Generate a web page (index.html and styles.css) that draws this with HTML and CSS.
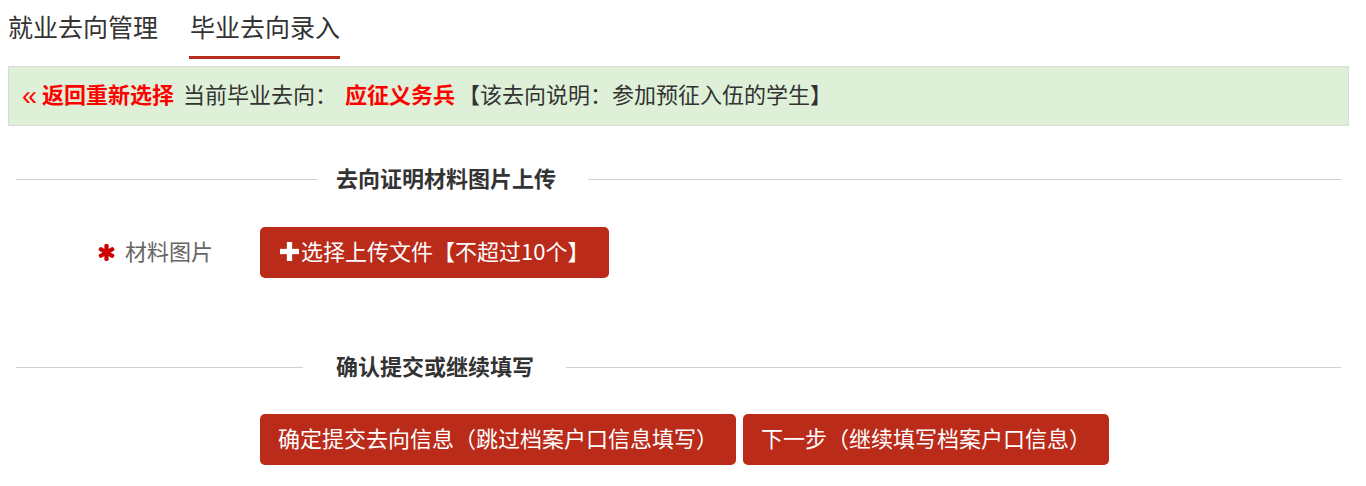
FILE: index.html
```html
<!DOCTYPE html>
<html lang="zh-CN">
<head>
  <meta charset="UTF-8">
  <title>毕业去向录入</title>
  <link rel="stylesheet" href="styles.css">
</head>
<body>
  <ul class="tabs">
    <li class="tab">就业去向管理</li>
    <li class="tab active">毕业去向录入</li>
  </ul>

  <div class="alert">
    <a class="back" href="#"><span class="laquo">&laquo;</span> <b>返回重新选择</b></a>
    <span>当前毕业去向：</span>
    <b class="red">应征义务兵</b><span class="note">【该去向说明：参加预征入伍的学生】</span>
  </div>

  <div class="container">
    <div class="divider divider-upload">
      <span class="divider-title">去向证明材料图片上传</span>
    </div>

    <div class="form-row">
      <label class="form-label">
        <svg class="required" width="17" height="17" viewBox="0 0 16 16">
          <rect x="6" y="0" width="4" height="16" rx="1.4" fill="#cc0000"/>
          <rect x="6" y="0" width="4" height="16" rx="1.4" fill="#cc0000" transform="rotate(60 8 8)"/>
          <rect x="6" y="0" width="4" height="16" rx="1.4" fill="#cc0000" transform="rotate(-60 8 8)"/>
        </svg>
        <span class="label-text">材料图片</span>
      </label>
      <button class="btn btn-upload" type="button">
        <svg class="plus" width="19" height="19" viewBox="0 0 18 18">
          <rect x="6.5" y="0" width="5" height="18" fill="#fff"/>
          <rect x="0" y="6.5" width="18" height="5" fill="#fff"/>
        </svg><span class="btn-text">选择上传文件【不超过10个】</span>
      </button>
    </div>

    <div class="divider divider-submit">
      <span class="divider-title">确认提交或继续填写</span>
    </div>

    <div class="actions">
      <button class="btn" type="button"><span class="btn-text">确定提交去向信息（跳过档案户口信息填写）</span></button>
      <button class="btn" type="button"><span class="btn-text">下一步（继续填写档案户口信息）</span></button>
    </div>
  </div>
</body>
</html>
```

FILE: styles.css
```css
body {
  margin: 0;
  padding: 8px 17px 8px 8px;
  font-family: "Noto Sans CJK SC", "Noto Sans", sans-serif;
  font-size: 22px;
  color: #333;
  background-color: #fff;
}

.tabs {
  display: flex;
  list-style: none;
  margin: 0;
  padding: 0;
}

.tab {
  font-size: 25px;
  line-height: 36px;
  padding-bottom: 12px;
  margin-right: 31px;
  border-bottom: 3px solid transparent;
  color: #333;
}

.tab.active {
  border-bottom-color: #b52d1c;
  padding-left: 1px;
}

.alert {
  margin-top: 7px;
  height: 58px;
  line-height: 52px;
  padding: 0 12px;
  background-color: #dff0d8;
  border: 1px solid #d9d9d9;
  white-space: nowrap;
}

.alert .back {
  color: #ff0000;
  text-decoration: none;
  margin-right: 4px;
}

.laquo {
  font-family: "Liberation Sans", sans-serif;
  font-size: 27px;
  margin-left: 1px;
  position: relative;
  top: 2px;
}

.red {
  color: #ff0000;
  margin-left: 3px;
}

.note {
  margin-left: 3px;
}

.container {
  padding: 0 8px;
}

.divider {
  display: flex;
  align-items: center;
  height: 30px;
  margin-top: 38px;
}

.divider::before,
.divider::after {
  content: "";
  height: 1px;
  background-color: #d0d0d0;
}

.divider::after {
  flex: 1;
}

.divider-upload::before {
  width: 301px;
}

.divider-submit {
  margin-top: 74px;
}

.divider-submit::before {
  width: 287px;
}

.divider-upload .divider-title {
  padding: 0 32px 3px 19px;
}

.divider-submit .divider-title {
  padding: 0 32px 3px 33px;
}

.divider-title {
  font-weight: bold;
  line-height: 27px;
}

.form-row {
  display: flex;
  align-items: center;
  margin-top: 33px;
}

.form-label {
  width: 197px;
  margin-right: 47px;
  display: flex;
  align-items: center;
  justify-content: flex-end;
  gap: 10px;
  color: #666;
}

.label-text {
  padding-bottom: 6px;
}

.btn {
  height: 51px;
  padding: 0 18px;
  border: none;
  border-radius: 5px;
  background-color: #ba2b1a;
  color: #fff;
  font-family: inherit;
  font-size: 22px;
  cursor: pointer;
  display: inline-flex;
  align-items: center;
}

.btn-text {
  padding-bottom: 5px;
}

.btn-upload {
  padding: 0 20px 0 20px;
}

.btn .plus {
  margin-right: 2px;
  margin-bottom: 3px;
}

.actions {
  display: flex;
  gap: 7px;
  margin-top: 32px;
  padding-left: 244px;
}
```
